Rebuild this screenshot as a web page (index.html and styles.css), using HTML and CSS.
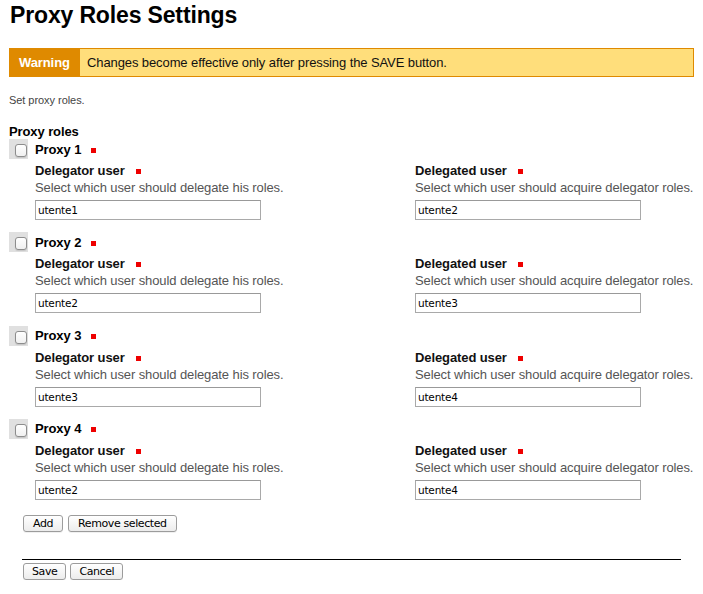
FILE: index.html
```html
<!DOCTYPE html>
<html>
<head>
<meta charset="utf-8">
<title>Proxy Roles Settings</title>
<link rel="stylesheet" href="styles.css">
</head>
<body>
<h1 class="title">Proxy Roles Settings</h1>
<div class="warning"><span class="warning-label">Warning</span><span class="warning-msg">Changes become effective only after pressing the SAVE button.</span></div>
<p class="intro">Set proxy roles.</p>
<div class="field-title">Proxy roles</div>

<div class="proxy">
  <div class="proxy-head"><span class="check-wrap"><input type="checkbox" class="check"></span><span class="proxy-name">Proxy 1</span><span class="req"></span></div>
  <div class="proxy-fields">
    <div class="field"><div class="label">Delegator user<span class="req"></span></div><div class="help">Select which user should delegate his roles.</div><input class="text" type="text" value="utente1"></div>
    <div class="field"><div class="label">Delegated user<span class="req"></span></div><div class="help">Select which user should acquire delegator roles.</div><input class="text" type="text" value="utente2"></div>
  </div>
</div>
<div class="proxy">
  <div class="proxy-head"><span class="check-wrap"><input type="checkbox" class="check"></span><span class="proxy-name">Proxy 2</span><span class="req"></span></div>
  <div class="proxy-fields">
    <div class="field"><div class="label">Delegator user<span class="req"></span></div><div class="help">Select which user should delegate his roles.</div><input class="text" type="text" value="utente2"></div>
    <div class="field"><div class="label">Delegated user<span class="req"></span></div><div class="help">Select which user should acquire delegator roles.</div><input class="text" type="text" value="utente3"></div>
  </div>
</div>
<div class="proxy">
  <div class="proxy-head"><span class="check-wrap"><input type="checkbox" class="check"></span><span class="proxy-name">Proxy 3</span><span class="req"></span></div>
  <div class="proxy-fields">
    <div class="field"><div class="label">Delegator user<span class="req"></span></div><div class="help">Select which user should delegate his roles.</div><input class="text" type="text" value="utente3"></div>
    <div class="field"><div class="label">Delegated user<span class="req"></span></div><div class="help">Select which user should acquire delegator roles.</div><input class="text" type="text" value="utente4"></div>
  </div>
</div>
<div class="proxy">
  <div class="proxy-head"><span class="check-wrap"><input type="checkbox" class="check"></span><span class="proxy-name">Proxy 4</span><span class="req"></span></div>
  <div class="proxy-fields">
    <div class="field"><div class="label">Delegator user<span class="req"></span></div><div class="help">Select which user should delegate his roles.</div><input class="text" type="text" value="utente2"></div>
    <div class="field"><div class="label">Delegated user<span class="req"></span></div><div class="help">Select which user should acquire delegator roles.</div><input class="text" type="text" value="utente4"></div>
  </div>
</div>

<div class="actions"><button class="btn" type="button">Add</button><button class="btn" type="button">Remove selected</button></div>
<div class="form-footer"><button class="btn" type="button">Save</button><button class="btn" type="button">Cancel</button></div>
</body>
</html>
```
FILE: styles.css
```css
html, body {
  background: #fff;
}
body {
  margin: 0 9px;
  font-family: "Liberation Sans", Arial, sans-serif;
  font-size: 13px;
  letter-spacing: -0.1px;
  color: #000;
}
.title {
  margin: 1px 0 0 1px;
  font-size: 23px;
  line-height: 28px;
  font-weight: bold;
  letter-spacing: -0.15px;
  color: #000;
}
.warning {
  display: flex;
  margin-top: 19px;
  border: 1px solid #df8a00;
  background: #ffde7b;
  height: 27px;
  line-height: 27px;
}
.warning-label {
  width: 70px;
  box-sizing: border-box;
  padding-left: 9px;
  background: #df8a00;
  color: #fff;
  font-weight: bold;
}
.warning-msg {
  padding-left: 7px;
  color: #111;
}
.intro {
  margin: 17px 0 0 0;
  font-size: 11px;
  line-height: 13px;
  letter-spacing: -0.05px;
  color: #444;
}
.field-title {
  margin-top: 17px;
  font-weight: bold;
  line-height: 15px;
}
.proxy {
  margin-bottom: 12.33px;
}
.proxy-head {
  display: flex;
  align-items: center;
  height: 20px;
}
.check-wrap {
  display: block;
  width: 19px;
  height: 20px;
  box-sizing: border-box;
  padding: 5px 0 0 6px;
  background: #e0e0e0;
}
.check {
  appearance: none;
  -webkit-appearance: none;
  display: block;
  margin: 0;
  width: 12px;
  height: 13px;
  box-sizing: border-box;
  border: 1px solid #8d8d8d;
  border-radius: 3px;
  background: linear-gradient(#ffffff, #f0f0f0);
  box-shadow: 0 1px 1px rgba(0,0,0,0.12);
}
.proxy-name {
  margin-left: 7px;
  font-weight: bold;
  line-height: 20px;
  padding-top: 1px;
}
.req {
  display: inline-block;
  width: 5px;
  height: 5px;
  margin-left: 10px;
  margin-bottom: 1px;
  background: #ee0000;
  vertical-align: baseline;
}
.proxy-head .req {
  align-self: center;
  margin-top: 3px;
}
.proxy-fields {
  display: grid;
  grid-template-columns: 380px 1fr;
  padding-left: 26px;
  margin-top: 3px;
}
.field {
  min-width: 0;
}
.label {
  font-weight: bold;
  line-height: 17px;
  color: #111;
  white-space: nowrap;
}
.label .req {
  margin-left: 11px;
}
.help {
  line-height: 17px;
  color: #555;
  white-space: nowrap;
}
.text {
  display: block;
  margin: 4px 0 0 0;
  width: 226px;
  height: 20px;
  box-sizing: border-box;
  border: 1px solid #a9a9a9;
  border-top-color: #999;
  padding: 0 2px;
  font-family: "DejaVu Sans", sans-serif;
  font-size: 10.5px;
  letter-spacing: -0.2px;
  color: #000;
  background: #fff;
  outline: none;
}
.actions {
  display: flex;
  gap: 5px;
  padding-top: 3px;
  padding-left: 14px;
}
.form-footer {
  display: flex;
  gap: 4px;
  margin: 27px 13px 0 13px;
  padding: 3px 0 0 1px;
  border-top: 1px solid #000;
}
.btn {
  margin: 0;
  height: 17px;
  padding: 0 9px;
  border: 1px solid #9c9c9c;
  border-radius: 3px;
  background: linear-gradient(#ffffff, #ececec);
  font-family: "DejaVu Sans", sans-serif;
  font-size: 11px;
  letter-spacing: -0.4px;
  line-height: 15px;
  color: #000;
  box-shadow: 0 1px 0 rgba(0,0,0,0.06);
}
.form-footer .btn {
  padding: 0 8px;
}
```
